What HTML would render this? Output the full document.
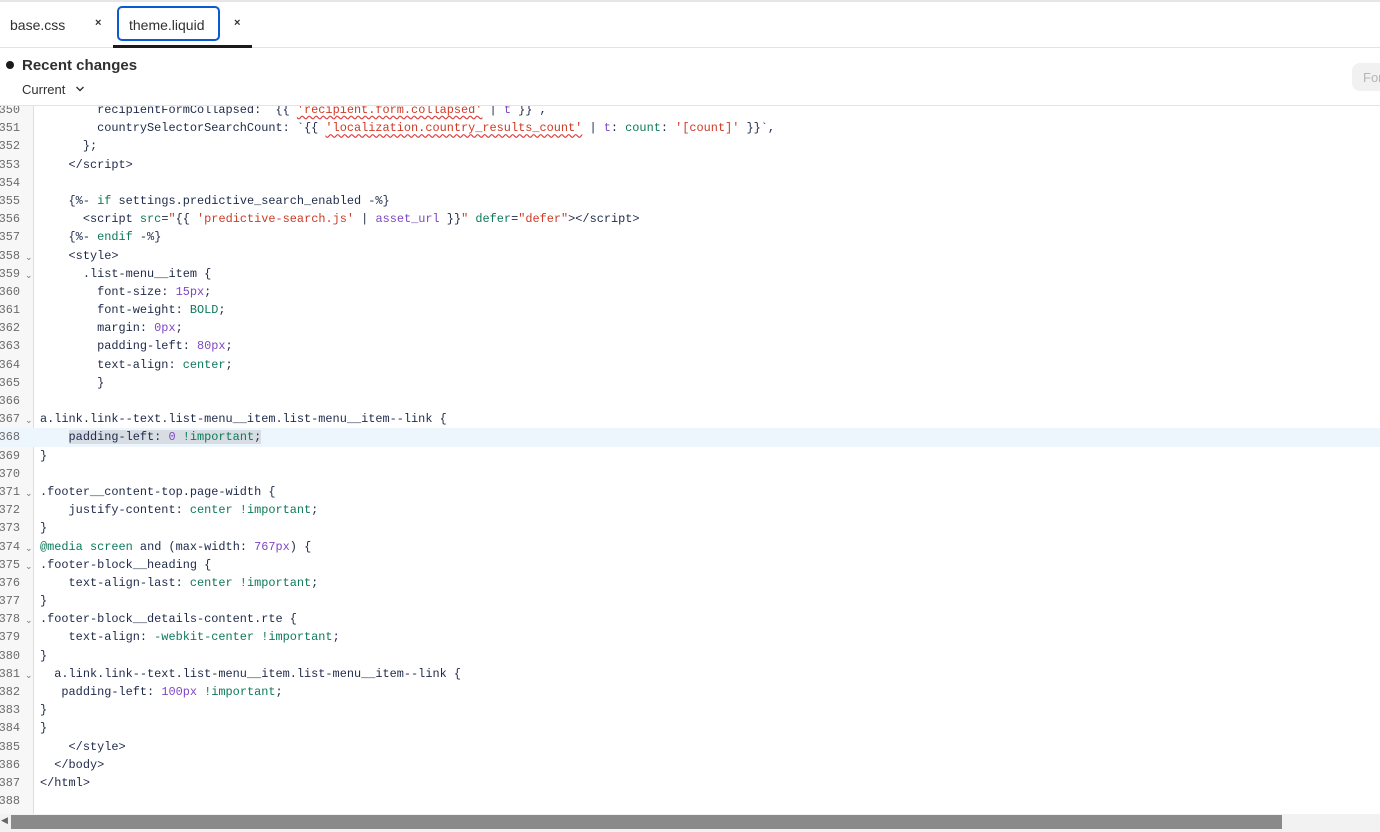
<!DOCTYPE html>
<html><head><meta charset="utf-8"><style>
*{margin:0;padding:0;box-sizing:border-box}
body{width:1380px;height:832px;overflow:hidden;background:#fff;font-family:"Liberation Sans",sans-serif;position:relative}
.topline{position:absolute;left:0;top:0;width:1380px;height:2px;background:#e6e6e6}
.tabs{position:absolute;left:0;top:2px;width:1380px;height:46px;border-bottom:1px solid #e3e3e3}
.tab{position:absolute;font-size:14px;color:#303030}
.x{position:absolute;font-size:11px;color:#303030;font-weight:bold}
.active{position:absolute;left:117px;top:6px;width:103px;height:35px;border:2px solid #0a5bd3;border-radius:5px}
.under{position:absolute;left:113px;top:45px;width:139px;height:3px;background:#1a1a1a}
.dot{position:absolute;left:6px;top:61px;width:8px;height:8px;border-radius:50%;background:#1a1a1a}
.rc{position:absolute;left:22px;top:57px;font-size:15px;font-weight:bold;color:#303030}
.cur{position:absolute;left:22px;top:82px;font-size:13px;color:#303030}
.btn{position:absolute;left:1352px;top:63px;width:40px;height:28px;background:#f1f1f1;border-radius:8px;font-size:13px;color:#b5b5b5;padding:7px 0 0 11px}
.hdrb{position:absolute;left:0;top:105px;width:1380px;height:1px;background:#e3e3e3}
.editor{position:absolute;left:0;top:106px;width:1380px;height:708px;overflow:hidden}
.gut{position:absolute;left:0;top:0;width:34px;height:708px;background:#f7f7f7;border-right:1px solid #dedede}
.lines{position:absolute;left:0;top:-5px;width:1380px}
.l{height:18.2px;line-height:18.2px;position:relative;font-family:"Liberation Mono",monospace;font-size:11.9px;color:#1e2a4a;white-space:pre}
.n{position:absolute;left:-6px;width:26px;text-align:right;color:#6b6b6b}
.f{position:absolute;left:25px;top:2px;font-size:9px;color:#777}
.c{position:absolute;left:40px}
.hl{background:#eef6fd}
.sel{background:#d7dde3}
.g{color:#0c7a5a}.r{color:#cf3a24}.p{color:#7e48c2}.w{text-decoration:underline wavy #e04040;text-underline-offset:2px}
.sb{position:absolute;left:0;top:814px;width:1380px;height:18px;background:#f2f2f2}
.thumb{position:absolute;left:11px;top:815px;width:1271px;height:14px;background:#8a8a8a}
.arr{position:absolute;left:1px;top:815px;font-size:9px;color:#666}
</style></head><body>
<div class="topline"></div>
<div class="tabs"></div>
<div class="tab" style="left:10px;top:17px">base.css</div>
<div class="x" style="left:95px;top:17px">×</div>
<div class="active"></div>
<div class="tab" style="left:129px;top:17px">theme.liquid</div>
<div class="x" style="left:234px;top:17px">×</div>
<div class="under"></div>
<div class="dot"></div>
<div class="rc">Recent changes</div>
<div class="cur">Current <svg width="10" height="8" viewBox="0 0 10 8" style="margin-left:6px;vertical-align:1px"><path d="M1.5 2 L5 5.5 L8.5 2" fill="none" stroke="#303030" stroke-width="1.4"/></svg></div>
<div class="btn">For</div>
<div class="hdrb"></div>
<div class="editor">
<div class="gut"></div>
<div class="lines">
<div class="l"><span class="n">350</span><span class="c">        recipientFormCollapsed: `{{ <span class="r w">'recipient.form.collapsed'</span> | <span class="p">t</span> }}`,</span></div>
<div class="l"><span class="n">351</span><span class="c">        countrySelectorSearchCount: `{{ <span class="r w">'localization.country_results_count'</span> | <span class="p">t</span>: <span class="g">count</span>: <span class="r">'[count]'</span> }}`,</span></div>
<div class="l"><span class="n">352</span><span class="c">      };</span></div>
<div class="l"><span class="n">353</span><span class="c">    &lt;/script&gt;</span></div>
<div class="l"><span class="n">354</span></div>
<div class="l"><span class="n">355</span><span class="c">    {%- <span class="g">if</span> settings.predictive_search_enabled -%}</span></div>
<div class="l"><span class="n">356</span><span class="c">      &lt;script <span class="g">src</span>=<span class="r">"</span>{{ <span class="r">'predictive-search.js'</span> | <span class="p">asset_url</span> }}<span class="r">"</span> <span class="g">defer</span>=<span class="r">"defer"</span>&gt;&lt;/script&gt;</span></div>
<div class="l"><span class="n">357</span><span class="c">    {%- <span class="g">endif</span> -%}</span></div>
<div class="l"><span class="n">358</span><span class="f">⌄</span><span class="c">    &lt;style&gt;</span></div>
<div class="l"><span class="n">359</span><span class="f">⌄</span><span class="c">      .list-menu__item {</span></div>
<div class="l"><span class="n">360</span><span class="c">        font-size: <span class="p">15px</span>;</span></div>
<div class="l"><span class="n">361</span><span class="c">        font-weight: <span class="g">BOLD</span>;</span></div>
<div class="l"><span class="n">362</span><span class="c">        margin: <span class="p">0px</span>;</span></div>
<div class="l"><span class="n">363</span><span class="c">        padding-left: <span class="p">80px</span>;</span></div>
<div class="l"><span class="n">364</span><span class="c">        text-align: <span class="g">center</span>;</span></div>
<div class="l"><span class="n">365</span><span class="c">        }</span></div>
<div class="l"><span class="n">366</span></div>
<div class="l"><span class="n">367</span><span class="f">⌄</span><span class="c">a.link.link--text.list-menu__item.list-menu__item--link {</span></div>
<div class="l hl"><span class="n">368</span><span class="c">    <span class="sel">padding-left: <span class="p">0</span> <span class="g">!important</span>;</span></span></div>
<div class="l"><span class="n">369</span><span class="c">}</span></div>
<div class="l"><span class="n">370</span></div>
<div class="l"><span class="n">371</span><span class="f">⌄</span><span class="c">.footer__content-top.page-width {</span></div>
<div class="l"><span class="n">372</span><span class="c">    justify-content: <span class="g">center !important</span>;</span></div>
<div class="l"><span class="n">373</span><span class="c">}</span></div>
<div class="l"><span class="n">374</span><span class="f">⌄</span><span class="c"><span class="g">@media</span> <span class="g">screen</span> and (max-width: <span class="p">767px</span>) {</span></div>
<div class="l"><span class="n">375</span><span class="f">⌄</span><span class="c">.footer-block__heading {</span></div>
<div class="l"><span class="n">376</span><span class="c">    text-align-last: <span class="g">center !important</span>;</span></div>
<div class="l"><span class="n">377</span><span class="c">}</span></div>
<div class="l"><span class="n">378</span><span class="f">⌄</span><span class="c">.footer-block__details-content.rte {</span></div>
<div class="l"><span class="n">379</span><span class="c">    text-align: <span class="g">-webkit-center !important</span>;</span></div>
<div class="l"><span class="n">380</span><span class="c">}</span></div>
<div class="l"><span class="n">381</span><span class="f">⌄</span><span class="c">  a.link.link--text.list-menu__item.list-menu__item--link {</span></div>
<div class="l"><span class="n">382</span><span class="c">   padding-left: <span class="p">100px</span> <span class="g">!important</span>;</span></div>
<div class="l"><span class="n">383</span><span class="c">}</span></div>
<div class="l"><span class="n">384</span><span class="c">}</span></div>
<div class="l"><span class="n">385</span><span class="c">    &lt;/style&gt;</span></div>
<div class="l"><span class="n">386</span><span class="c">  &lt;/body&gt;</span></div>
<div class="l"><span class="n">387</span><span class="c">&lt;/html&gt;</span></div>
<div class="l"><span class="n">388</span></div>
</div>
</div>
<div class="sb"></div>
<div class="thumb"></div>
<div class="arr">◀</div>
</body></html>
